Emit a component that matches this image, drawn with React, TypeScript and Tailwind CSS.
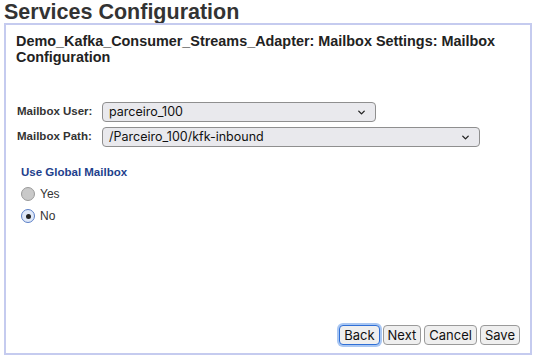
import { ChevronDown } from "lucide-react";

const sysFont = { fontFamily: "Inter, 'Noto Sans', sans-serif" };

const Select = ({ value, width }: { value: string; width: string }) => (
    <div
        className={`flex h-[20px] ${width} items-center justify-between rounded-[4px] border border-[#8f8f8f] bg-[#e9e9ed] pl-[6px] pr-[8px] text-[12.5px] text-[#111]`}
        style={sysFont}
    >
        <span className="leading-none">{value}</span>
        <ChevronDown className="h-[11px] w-[11px] text-[#222]" strokeWidth={3} />
    </div>
);

const Radio = ({ checked, label }: { checked?: boolean; label: string }) => (
    <div className="flex h-[14px] items-center gap-[5px] text-[12px] text-[#333]">
        {checked ? (
            <span className="flex h-[14px] w-[14px] items-center justify-center rounded-full border border-[#5b7fc7] bg-[#dfe8f8]">
                <span className="h-[5px] w-[5px] rounded-full bg-[#222]" />
            </span>
        ) : (
            <span className="h-[14px] w-[14px] rounded-full border border-[#9a9a9a] bg-[#c9c9c9]" />
        )}
        <span>{label}</span>
    </div>
);

const Btn = ({ label, focused }: { label: string; focused?: boolean }) => (
    <button
        type="button"
        className={`h-[20px] rounded-[4px] border bg-[#efefef] px-[4px] text-[13px] leading-none text-[#111] ${focused ? "border-[#2f6fd6] shadow-[0_0_0_2px_#a9c7f3]" : "border-[#9a9a9a]"}`}
        style={sysFont}
    >
        {label}
    </button>
);

export default function App() {
    return (
        <div
            className="flex h-[357px] w-[537px] flex-col bg-white pl-[4px] pr-[5px] pb-[2px]"
            style={{ fontFamily: "'Liberation Sans', Arial, sans-serif" }}
        >
            <h1 className="h-[23px] text-[21.5px] font-bold leading-[24px] text-[#333]">Services Configuration</h1>

            <div className="flex flex-1 flex-col border-2 border-[#c5cbef] px-[10px] pt-[8px] pb-[8px]">
                <h2 className="text-[14.4px] font-bold leading-[16px] text-[#222]">
                    Demo_Kafka_Consumer_Streams_Adapter: Mailbox Settings: Mailbox Configuration
                </h2>

                <div className="mt-[37px] flex flex-col gap-[5px] pl-[1px]">
                    <div className="flex items-center">
                        <span className="w-[85px] text-[11.5px] font-bold text-[#333]">Mailbox User:</span>
                        <Select value="parceiro_100" width="w-[274px]" />
                    </div>
                    <div className="flex items-center">
                        <span className="w-[85px] text-[11.5px] font-bold text-[#333]">Mailbox Path:</span>
                        <Select value="/Parceiro_100/kfk-inbound" width="w-[378px]" />
                    </div>
                </div>

                <div className="mt-[18px] pl-[5px]">
                    <div className="text-[11.5px] font-bold leading-[14px] text-[#1e3f8c]">Use Global Mailbox</div>
                    <div className="mt-[8px] flex flex-col gap-[8px]">
                        <Radio label="Yes" />
                        <Radio label="No" checked />
                    </div>
                </div>

                <div className="mt-auto flex justify-end gap-[3px]">
                    <Btn label="Back" focused />
                    <Btn label="Next" />
                    <Btn label="Cancel" />
                    <Btn label="Save" />
                </div>
            </div>
        </div>
    );
}
